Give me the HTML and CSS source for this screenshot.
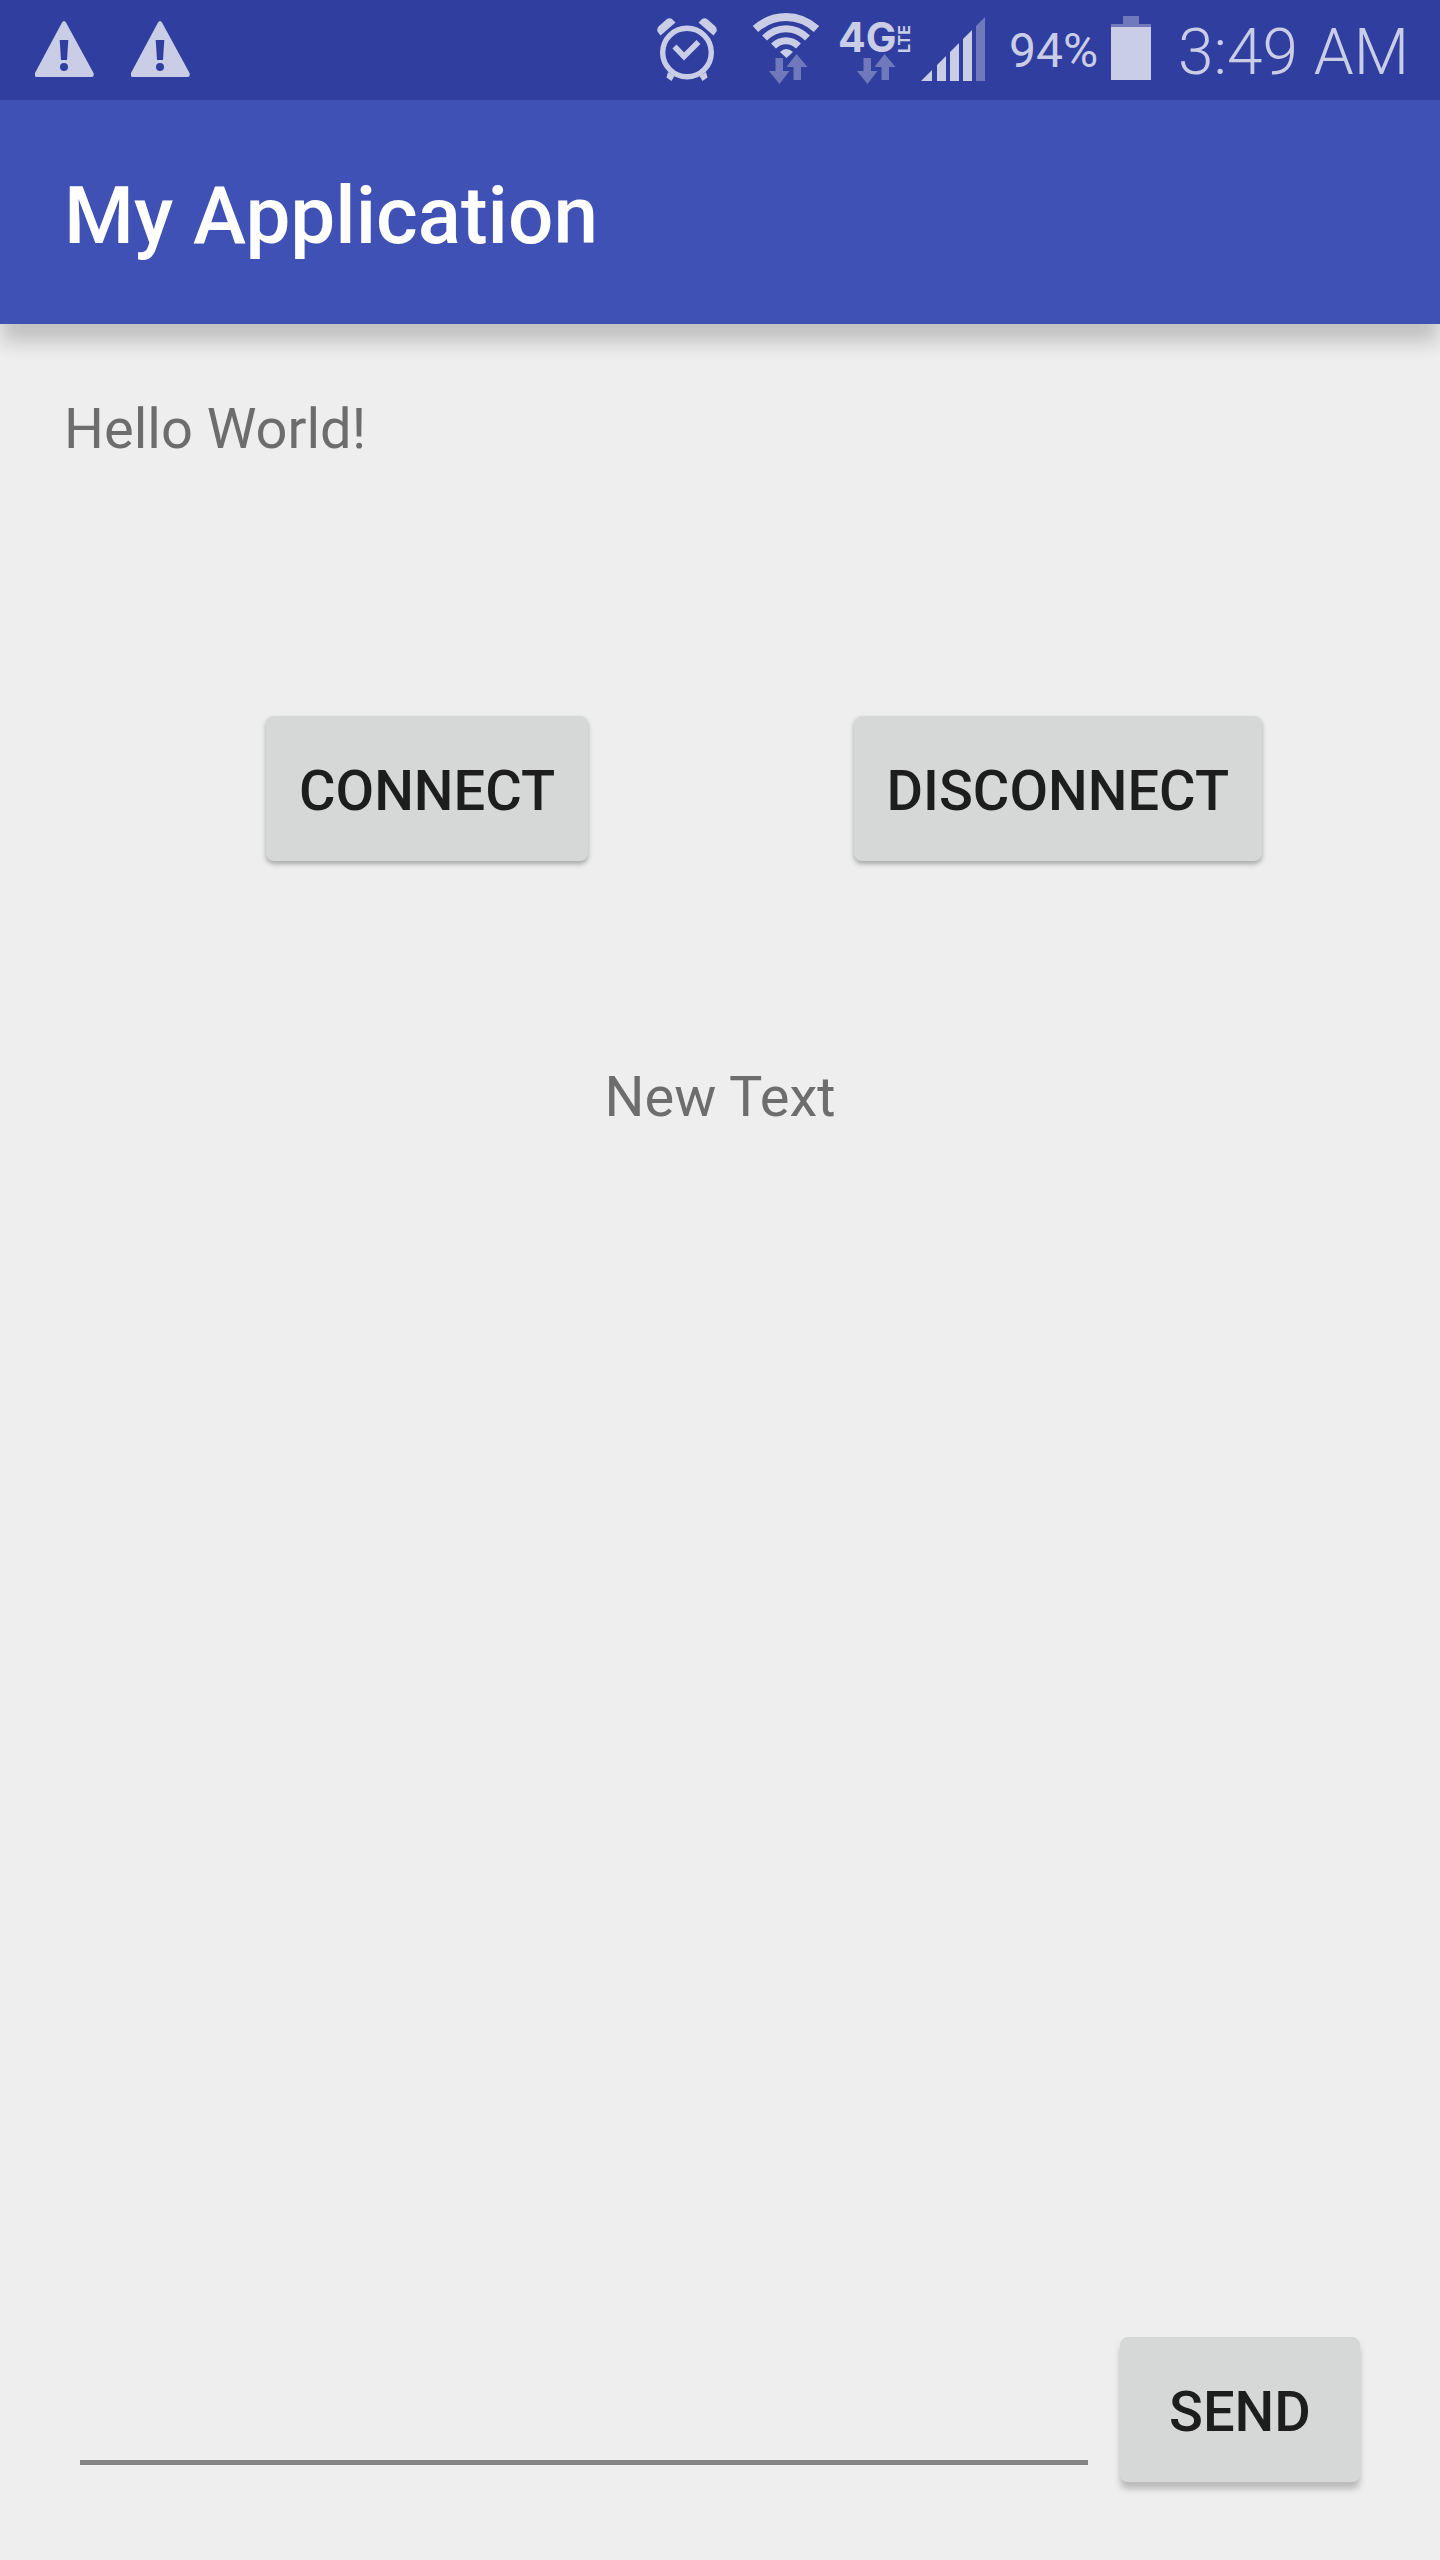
FILE: index.html
```html
<!DOCTYPE html>
<html lang="en">
<head>
  <meta charset="utf-8">
  <meta name="viewport" content="width=device-width, initial-scale=1">
  <title>My Application</title>
  <link rel="stylesheet" href="styles.css">
</head>
<body>
  <div class="screen">
    <div class="status-bar">
      <div class="notifications">
        <svg class="icon" width="60" height="100" viewBox="35 0 60 100" role="img" aria-label="Warning">
          <path class="lit" fill-rule="evenodd" d="M62 22.500Q64 19.500 66 22.500L93.500 73Q94.500 76.800 91.500 77H36.500Q33.800 76.800 35 73ZM59.700 40L61 60H67L68.300 40ZM64 63a4 4 0 1 0 0 8a4 4 0 1 0 0-8Z"/>
        </svg>
        <svg class="icon" width="60" height="100" viewBox="35 0 60 100" role="img" aria-label="Warning">
          <path class="lit" fill-rule="evenodd" d="M62 22.500Q64 19.500 66 22.500L93.500 73Q94.500 76.800 91.500 77H36.500Q33.800 76.800 35 73ZM59.700 40L61 60H67L68.300 40ZM64 63a4 4 0 1 0 0 8a4 4 0 1 0 0-8Z"/>
        </svg>
      </div>
      <div class="system">
        <svg class="icon" width="91" height="100" viewBox="657 0 91 100" role="img" aria-label="Alarm set">
          <circle class="line" cx="687" cy="52.500" r="24.300" stroke-width="5.400"/>
          <path class="line" stroke-width="5.600" d="M674.500 46.500L684 56.500L698.500 42"/>
          <path class="lit" d="M660.500 35.500L657.500 31.500Q656.500 28.500 659 26L667 19Q669.500 17.500 672 19L675.500 22.500ZM713.500 35.500L716.500 31.500Q717.500 28.500 715 26L707 19Q704.500 17.500 702 19L698.500 22.500Z"/>
          <path class="lit" d="M668 72L674.500 76L671.500 81L666.500 77.500ZM706 72L699.500 76L702.500 81L707.500 77.500Z"/>
        </svg>
        <svg class="icon" width="80" height="100" viewBox="753 0 80 100" role="img" aria-label="Wi-Fi">
          <g class="line">
            <path stroke-width="8" d="M755.500 29Q769 17 786 17T816.500 29"/>
            <path stroke-width="7" d="M764.500 38Q774 28.700 786 28.700T807.500 38"/>
            <path stroke-width="7" d="M773.500 46Q779 40.700 786 40.700T798.500 46"/>
          </g>
          <path class="lit" d="M780 52Q786 46 793 52L786.500 58Z"/>
          <path class="dim" d="M775.500 58H783V71H789.500L779.500 84L769 71H775.500ZM796.500 54L807.500 67H801V80H793.500V67H786.500Z"/>
        </svg>
        <svg class="icon" width="78" height="100" viewBox="838 0 78 100" role="img" aria-label="4G LTE">
          <text class="network" x="838" y="52">4G</text>
          <text class="network-type" transform="translate(910 53) rotate(-90)">LTE</text>
          <path class="dim" d="M863.500 58H871V71H877.500L867.500 84L857 71H863.500ZM884.500 54L895.500 67H889V80H881.500V67H874.500Z"/>
        </svg>
        <svg class="icon" width="83" height="100" viewBox="921 0 83 100" role="img" aria-label="Signal strength">
          <path class="lit" d="M921 81L932 70V81ZM937 81V65L946 56V81ZM950 81V52L959 43V81ZM963 81V39L972 30V81Z"/>
          <path class="dim" d="M976 81V26L985 17V81Z"/>
        </svg>
        <span class="charge">94%</span>
        <svg class="icon" width="63" height="100" viewBox="1110 0 63 100" role="img" aria-label="Battery">
          <path class="dim" d="M1123 16H1139V24H1151V27H1111V24H1123Z"/>
          <path class="lit" d="M1111 27H1151V80H1111Z"/>
        </svg>
        <time class="clock" datetime="03:49">3:49 AM</time>
      </div>
    </div>
    <header class="app-bar">
      <h1 class="title">My Application</h1>
    </header>
    <main class="content">
      <p class="greeting">Hello World!</p>
      <div class="connection">
        <button class="button" type="button">CONNECT</button>
        <button class="button" type="button">DISCONNECT</button>
      </div>
      <p class="message">New Text</p>
      <form class="composer">
        <input class="field" type="text" aria-label="Message">
        <button class="button send" type="button">SEND</button>
      </form>
    </main>
  </div>
</body>
</html>
```

FILE: styles.css
```css
* {
  box-sizing: border-box;
}

body {
  margin: 0;
  background: #eeeeee;
  color: #6d6d6d;
  font-family: Roboto, sans-serif;
  font-size: 56px;
  line-height: 66px;
}

.screen {
  display: flex;
  flex-direction: column;
  min-height: 100vh;
}

.status-bar {
  display: flex;
  justify-content: space-between;
  padding: 0 31px 0 35px;
  background: #303f9f;
  color: #c9cde6;
}

.notifications {
  display: flex;
  gap: 36px;
}

.system {
  display: flex;
  align-items: center;
  gap: 5px;
}

.icon {
  display: block;
  flex: none;
}

.lit {
  fill: #c9cde6;
}

.dim {
  fill: #6f79bb;
}

.line {
  fill: none;
  stroke: #c9cde6;
}

.network {
  fill: #c9cde6;
  font: bold 41px Inter, sans-serif;
}

.network-type {
  fill: #c9cde6;
  font: bold 16px Inter, sans-serif;
}

.charge {
  padding: 2px 7px 0 0;
  font-size: 48px;
}

.clock {
  padding-top: 5px;
  font-size: 64px;
  font-weight: 300;
  white-space: nowrap;
}

.app-bar {
  padding: 69px 64px 61px;
  background: #3f51b5;
  box-shadow: 0 20px 18px -2px rgba(0, 0, 0, 0.19);
  color: #ffffff;
}

.title {
  margin: 0;
  font-size: 80px;
  font-weight: 500;
  line-height: 94px;
}

.content {
  display: flex;
  flex: 1;
  flex-direction: column;
  padding: 72px 80px 78px;
}

.greeting {
  margin: 0 -16px;
}

.connection {
  display: flex;
  justify-content: space-between;
  margin-top: 254px;
  padding: 0 98px 0 186px;
}

.button {
  padding: 42px 33px 37px;
  border: 0;
  border-radius: 8px;
  background: #d6d7d7;
  box-shadow: 0 3px 5px rgba(0, 0, 0, 0.3);
  color: #1d1d1d;
  font: 500 56px/66px Roboto, sans-serif;
}

.message {
  margin: 203px 0 0;
  text-align: center;
}

.composer {
  display: flex;
  gap: 32px;
  margin-top: auto;
}

.field {
  flex: 1;
  min-width: 0;
  margin-bottom: 17px;
  padding: 0;
  border: 0;
  border-bottom: 5px solid #858585;
  border-radius: 0;
  outline: 0;
  background: transparent;
  color: #1d1d1d;
  font: inherit;
}

.send {
  min-width: 240px;
  box-shadow: 0 7px 6px rgba(0, 0, 0, 0.22);
}
```
